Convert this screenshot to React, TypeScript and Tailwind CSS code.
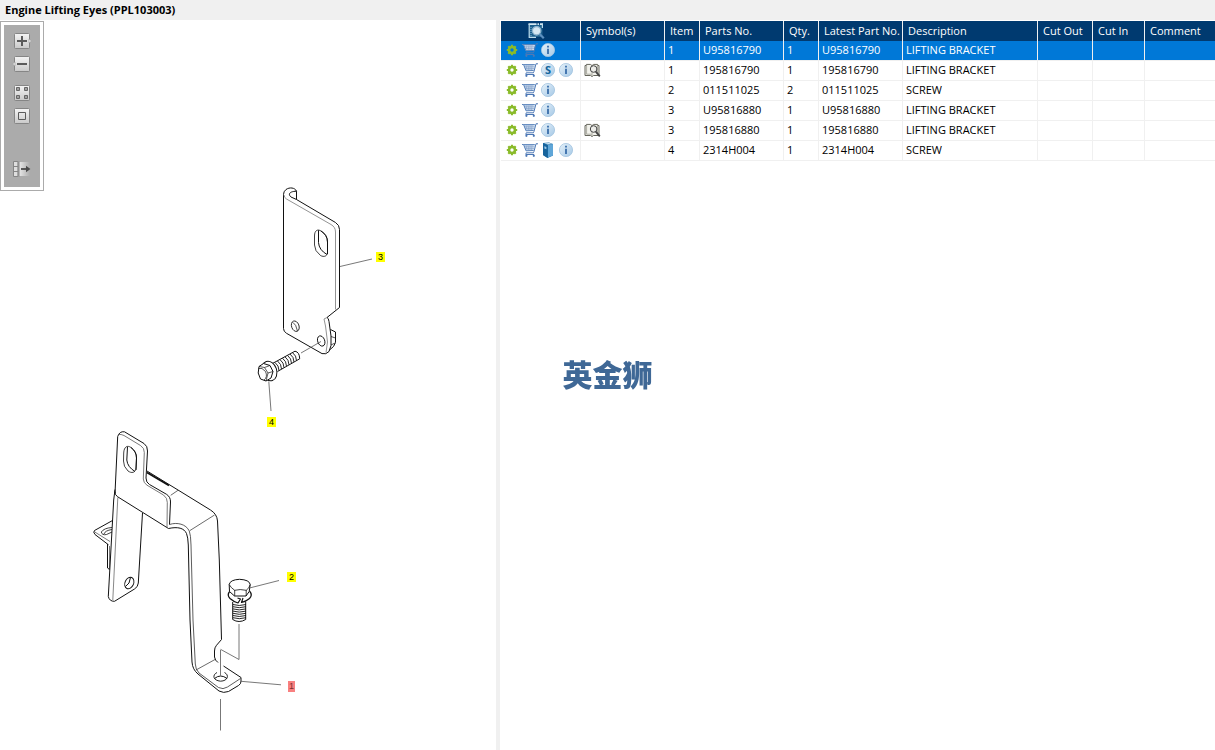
import type { ReactNode } from 'react'

type Action = 'gear' | 'cart' | 'info' | 'supersede' | 'book'

interface PartRow {
  actions: Action[]
  symbol?: boolean
  item: string
  partNo: string
  qty: string
  latest: string
  description: string
}

const ROWS: PartRow[] = [
  { actions: ['gear', 'cart', 'info'], item: '1', partNo: 'U95816790', qty: '1', latest: 'U95816790', description: 'LIFTING BRACKET' },
  { actions: ['gear', 'cart', 'supersede', 'info'], symbol: true, item: '1', partNo: '195816790', qty: '1', latest: '195816790', description: 'LIFTING BRACKET' },
  { actions: ['gear', 'cart', 'info'], item: '2', partNo: '011511025', qty: '2', latest: '011511025', description: 'SCREW' },
  { actions: ['gear', 'cart', 'info'], item: '3', partNo: 'U95816880', qty: '1', latest: 'U95816880', description: 'LIFTING BRACKET' },
  { actions: ['gear', 'cart', 'info'], symbol: true, item: '3', partNo: '195816880', qty: '1', latest: '195816880', description: 'LIFTING BRACKET' },
  { actions: ['gear', 'cart', 'book', 'info'], item: '4', partNo: '2314H004', qty: '1', latest: '2314H004', description: 'SCREW' },
]

const HEADERS = ['Symbol(s)', 'Item', 'Parts No.', 'Qty.', 'Latest Part No.', 'Description', 'Cut Out', 'Cut In', 'Comment']

function GearIcon() {
  return (
    <svg viewBox="0 0 18 18" className="size-[18px]">
      <circle cx="9" cy="9" r="3" fill="none" stroke="#8abb2a" strokeWidth="2.6" />
      <g stroke="#8abb2a" strokeWidth="2.2">
        <path d="M9 3.8v2M9 12.2v2M3.8 9h2M12.2 9h2M5.3 5.3l1.4 1.4M11.3 11.3l1.4 1.4M5.3 12.7l1.4-1.4M11.3 6.7l1.4-1.4" />
      </g>
    </svg>
  )
}

function CartIcon() {
  return (
    <svg viewBox="0 0 18 18" className="size-[18px]" fill="none">
      <path d="M2.5 4h11.5l-1.2 5.5H4.8z" fill="#d3e1f1" />
      <path d="M5 4l1.2 5.5M7 4l.8 5.5M9 4v5.5M11 4l-.4 5.5M3.2 5.8h10.3M4 7.6h9.1" stroke="#86a4cc" strokeWidth="0.7" />
      <path d="M1 3.5h1.6L5 9.8l7.6-.3M2.5 3.6h11.3" stroke="#5b84bb" />
      <path d="M17 2.8h-2l-2 7.6-.6 1.4H5.2l-.4 1.7h8.4" stroke="#4d78b5" />
      <circle cx="5.4" cy="14.8" r="1.1" fill="#4d78b5" />
      <circle cx="12.8" cy="14.8" r="1.1" fill="#4d78b5" />
    </svg>
  )
}

function InfoIcon() {
  return (
    <svg viewBox="0 0 18 18" className="size-[18px]">
      <defs>
        <linearGradient id="disc" x1="0" y1="0" x2="1" y2="1">
          <stop offset="0" stopColor="#e6f2fa" />
          <stop offset="1" stopColor="#a5c8e6" />
        </linearGradient>
      </defs>
      <circle cx="9" cy="9" r="6.6" fill="url(#disc)" stroke="#a3c4e0" strokeWidth="0.8" />
      <path d="M8 4.8h2v1.8H8zM8 7.8h2V13H8z" fill="#4577b0" />
    </svg>
  )
}

function SupersedeIcon() {
  return (
    <svg viewBox="0 0 18 18" className="size-[18px]">
      <circle cx="9" cy="9" r="6.6" fill="url(#disc)" stroke="#a3c4e0" strokeWidth="0.8" />
      <text x="9" y="13" textAnchor="middle" fontSize="11" fontWeight="bold" fontFamily="Open Sans, sans-serif" fill="#11649c">S</text>
    </svg>
  )
}

function BookIcon() {
  return (
    <svg viewBox="0 0 18 18" className="size-[18px]">
      <path d="M4 2l6-.6 4 1.6v11.4L8.6 17 4 14z" fill="#1d6ea8" />
      <path d="M9 4l5-1v11.4L9 16.6z" fill="#5fa6d8" />
      <path d="M5 2.4l5-.5 3 1-4.4.7z" fill="#d8eaf6" />
      <path d="M4 2.4L8.6 4v13L4 14z" fill="#17639c" />
      <path d="M5.4 5.2l2 .7v2.4l-2-.8z" fill="#9dcbea" />
    </svg>
  )
}

function OpenBookIcon() {
  return (
    <svg viewBox="0 0 18 18" className="size-[18px]" fill="none">
      <path d="M1 4.5h1.4V3.4h4L8 4.6l1.6-1.2h4v1.1H15v10H9.4L8 15.6l-1.4-1.1H1z" fill="#f2f2ec" stroke="#66665c" />
      <path d="M2.6 4v9.2h4L8 14.4V5M13.4 4v9.2" stroke="#9a9a90" strokeWidth="0.8" />
      <circle cx="9.6" cy="8" r="3.3" fill="#ecece8" stroke="#444" strokeWidth="1" />
      <path d="M11.8 10.6l4 4.8" stroke="#444" strokeWidth="1.8" />
    </svg>
  )
}

function PreviewIcon() {
  return (
    <svg viewBox="0 0 18 18" className="size-[18px]" fill="none">
      <path d="M2 2h13.5v13H2z" fill="#1c5f8d" />
      <path d="M1.5 2.2h14.5" stroke="#d4e8f2" strokeWidth="1.8" strokeDasharray="8 1 1.5 1" />
      <path d="M2.2 2v13.4H9M15.4 2v4" stroke="#bcdcec" strokeWidth="1.2" />
      <path d="M4 5v9" stroke="#86b9d6" strokeDasharray="1 1" />
      <circle cx="9.6" cy="8.8" r="4.2" fill="#d5e7f2" stroke="#8eb4cf" strokeWidth="1.3" />
      <path d="M12.8 12.2l4 4" stroke="#5c8fc0" strokeWidth="2.2" />
    </svg>
  )
}

const ACTIONS: Record<Action, { label: string; icon: ReactNode }> = {
  gear: { label: 'Options', icon: <GearIcon /> },
  cart: { label: 'Add to cart', icon: <CartIcon /> },
  info: { label: 'Information', icon: <InfoIcon /> },
  supersede: { label: 'Supersession', icon: <SupersedeIcon /> },
  book: { label: 'Catalogue', icon: <BookIcon /> },
}

function ToolButton({ label, children }: { label: string; children: ReactNode }) {
  return (
    <button type="button" aria-label={label} className="size-5">
      <svg viewBox="0 0 20 20" className="size-5" fill="none">
        {children}
      </svg>
    </button>
  )
}

function Plate() {
  return <rect x="2.5" y="2.5" width="15" height="15" rx="1" fill="url(#plate)" stroke="#858585" />
}

function Toolbar() {
  return (
    <div className="mt-px shrink-0 self-start border border-[#ababab] bg-white p-[3px]">
      <div className="flex w-9 flex-col items-center bg-[#ababab] pt-1.5 pb-0.5">
        <div className="flex flex-col gap-[3px]">
          <ToolButton label="Zoom in">
            <defs>
              <linearGradient id="plate" x1="0" y1="0" x2="0" y2="1">
                <stop offset="0" stopColor="#f4f4f4" />
                <stop offset="1" stopColor="#c9c9c9" />
              </linearGradient>
            </defs>
            <Plate />
            <path d="M17 8l2.5 2-2.5 2z" fill="#eee" stroke="#999" strokeWidth="0.6" />
            <path d="M5 10h10M10 5v10" stroke="#5a5a5a" strokeWidth="2" />
          </ToolButton>
          <ToolButton label="Zoom out">
            <Plate />
            <path d="M3 8l-2.5 2L3 12z" fill="#eee" stroke="#999" strokeWidth="0.6" />
            <path d="M5 10h10" stroke="#5a5a5a" strokeWidth="2" />
          </ToolButton>
        </div>
        <div className="mt-[9px] flex flex-col gap-[3px]">
          <ToolButton label="Fit to window">
            <Plate />
            <path d="M4.5 4.5h3v3h-3zM12.5 4.5h3v3h-3zM4.5 12.5h3v3h-3zM12.5 12.5h3v3h-3z" fill="#a0a0a0" stroke="#666" />
          </ToolButton>
          <ToolButton label="Actual size">
            <Plate />
            <path d="M6.5 6.5h7v7h-7z" stroke="#5a5a5a" />
          </ToolButton>
        </div>
        <div className="mt-[33px]">
          <ToolButton label="Move panel">
            <defs>
              <linearGradient id="fade" x1="0" y1="0" x2="1" y2="0">
                <stop offset="0" stopColor="#e8e8e8" />
                <stop offset="1" stopColor="#ababab" />
              </linearGradient>
            </defs>
            <path d="M7 3h11v14H7z" fill="url(#fade)" />
            <path d="M1.5 2.5h4.4v15H1.5z" fill="#dedede" stroke="#858585" />
            <path d="M1.5 7.5H6M1.5 12.5H6M7 2.5v15" stroke="#858585" />
            <path d="M9 10h6" stroke="#4a4a4a" strokeWidth="1.8" />
            <path d="M14 6.8l4.4 3.2-4.4 3.2z" fill="#4a4a4a" />
          </ToolButton>
        </div>
      </div>
    </div>
  )
}

interface CalloutProps {
  x: number
  y: number
  label: string
  active?: boolean
}

function Callout({ x, y, label, active }: CalloutProps) {
  return (
    <g>
      <rect x={x - (active ? 4 : 5)} y={y - 5} width={active ? 7 : 9} height={active ? 11 : 10} fill={active ? '#f88080' : '#ffff00'} />
      <text x={x - 0.5} y={y + 3} textAnchor="middle" fontSize="9" fontFamily="Liberation Sans, sans-serif" fill={active ? '#7c3030' : '#000'}>
        {label}
      </text>
    </g>
  )
}

function Diagram() {
  return (
    <svg
      viewBox="44 20 452 730"
      className="w-[452px] shrink-0"
      fill="none"
      stroke="#111"
      strokeLinejoin="round"
      role="img"
      aria-label="Engine lifting eyes exploded view"
    >
      {/* upper bracket */}
      <path d="M330.5 329.5L335.5 332V342.5L333.5 346.5L329.5 350" />
      <path d="M331 336.5L335.5 338M331 345L335 343" strokeWidth="0.7" />
      <path d="M283.5 194.5V328.5Q283.5 331.5 286.5 333.3L322 353.6Q326 354.8 329 351.5L331 345.5V336L329 321.5Q328.5 317.8 327 317.5L339.5 307.5V229.5Q339.5 225 335.5 222.5L296.5 199.5L291 197C287.5 194 290 191.3 296.5 191.2C295 187.5 289.5 187 286 189.5Q283.5 191.5 283.5 194.5M296.5 191.2V199.5" />
      <path d="M284 195Q284 197.5 286.5 199L331 224.5Q335.5 227 335.5 232V309.5M324 319L325.5 326L327.5 342L326 352.5M327 317.5L324 319" stroke="#777" strokeWidth="0.8" />
      <path d="M314.5 236C314.5 230 318 229 321 231Q327.5 235 327.5 242V252.5C327.5 256 324 257.5 320.5 255.5Q314.5 251 314.5 245Z" strokeWidth="0.8" />
      <path d="M318.5 230.3V242.5Q319 250 327 254.5M321 231Q327.5 235 327.5 242V254" />
      <ellipse cx="295.3" cy="326.2" rx="3.7" ry="5.4" transform="rotate(-20 295.3 326.2)" strokeWidth="0.8" />
      <path d="M293 322.5Q296 324 297.5 331" strokeWidth="0.7" />
      <ellipse cx="321.2" cy="341" rx="3.5" ry="5.3" transform="rotate(-20 321.2 341)" strokeWidth="0.9" />
      <path d="M301 353L321 341.5" stroke="#555" strokeWidth="0.8" />

      {/* flanged screw */}
      <path d="M273 363.2L295 351.2Q299.5 352 299.7 358.8L277.5 371.5" fill="#fff" />
      <path d="M275 362.5q4 3 4 8M277.5 361q4 3 4 8M280 359.6q4 3 4 8M282.5 358.2q4 3 4 8M285 356.8q4 3 4 8M287.5 355.4q4 3 4 8M290 354q4 3 4 8M292.5 352.6q4 3 4 8" strokeWidth="0.9" />
      <ellipse cx="269.3" cy="371" rx="7.4" ry="10" transform="rotate(-18 269.3 371)" fill="#fff" />
      <path d="M259 366.5L263.5 363.5L270 365.5L273 371.5L271 378L266 381L260.5 379L258.2 373Z" fill="#fff" />
      <path d="M259 366.5L264.5 367.5L268 373L266 381M264.5 367.5L270 365.5M268 373L273 371.5M258.5 368.5Q262 367 265.5 371.5Q268 377 264 380" strokeWidth="0.7" />
      <path d="M268.8 381.5L271 411M340 266.5L372 259" stroke="#555" strokeWidth="0.8" />

      {/* rear tab of the lower bracket */}
      <path d="M112.5 520.5L94.5 530.5Q92.8 532 95 534.5L108.5 544.8M107.5 544V568L109.5 569.5" />
      <path d="M94 531.5L110 541.5M109.5 546V569" strokeWidth="0.7" stroke="#444" />
      <path d="M112 527.5Q104 528 101.3 532Q102 535.5 106.5 534.5L112 532M104 534Q105 530.5 112 529.5" strokeWidth="0.8" />

      {/* rear leg */}
      <path d="M115 489.5L113.7 500L108.3 596.5Q109.5 601.5 114.5 601.3L134.5 589Q138 587 138.3 583L142.5 513" />
      <path d="M117.8 497.5L112.8 600" strokeWidth="0.7" stroke="#555" />
      <ellipse cx="129.3" cy="583" rx="4.3" ry="6" transform="rotate(24 129.3 583)" strokeWidth="0.9" />
      <path d="M130.5 577.5Q130 584 125.5 586.5" />

      {/* hook plate */}
      <path d="M115 493L117.7 436.5Q119.5 431 124.5 431.8L144 443.5Q147.7 446 147.5 451L146 478Q146 482.5 149.5 484.5L166.5 494.3Q170.7 497 170.5 502L169.5 524.5" />
      <path d="M118.5 434.5Q121 434 124 435.5L140.5 445.5Q144.5 448 144.3 452.5L143.3 479Q143.5 483 147 485.2L163.5 495Q167.5 498 167.3 502.5L167 527" strokeWidth="0.8" stroke="#555" />
      <path d="M115 491.5Q114.5 494.5 117.5 496.7L168.5 528.5" />
      <path d="M123.7 453C124 446.5 127.5 445 131 447.5Q136.5 451.5 136.5 458L136 468C135.5 473 131.5 473.5 128 471Q123.3 466.5 123.5 461Z" strokeWidth="0.8" />
      <path d="M127.5 446.8L126.8 460Q127.5 467 135 471.5M131 447.5Q136.5 451.5 136.5 458L136 470" />

      {/* strap and long leg */}
      <path d="M147 471L178 490L210.5 510Q217 514 217.5 521L219.3 560L221.5 639.5L216.5 645.3Q214.5 647.5 214.5 651V657Q215 660.5 218 662.5" />
      <path d="M147 472.5L169 485.5" strokeWidth="1.8" />
      <path d="M178 490.3L170.7 495.3M214.5 515L190 530.5M196 670L215 659.5" strokeWidth="0.8" stroke="#444" />
      <path d="M169.5 524.5C177 522 186 524 189.3 531Q190.8 535 191 545L193 620L195.3 664Q195.5 669.5 199 673L218.5 687.5Q223 690 227.5 687L240.5 678.5" strokeWidth="0.8" stroke="#333" />
      <path d="M168.5 528.5C178 526.5 184 528 186.5 533.5Q188 537 188.3 545L190 620L192 662Q192.5 669.5 198 674L219 691Q223.5 693.5 228.5 691.5L238.5 685.5Q241.2 684 241 681V677.5L223.5 666" />
      <path d="M217 672.5C212 675 213 680.5 220.5 681.2C228 681 229.5 675 224.5 672.5" strokeWidth="0.9" />
      <path d="M214.5 678.5Q220.5 673.5 227 678.5" />

      {/* hex screw with washer */}
      <path d="M232.7 602V619.5Q239 623.5 245.7 619.5V602" fill="#fff" />
      <path d="M233 604.5q6 2 13 0M233 606.7q6 2 13 0M233 608.9q6 2 13 0M233 611.1q6 2 13 0M233 613.3q6 2 13 0M233 615.5q6 2 13 0M233 617.7q6 2 13 0" strokeWidth="0.9" />
      <path d="M230 591Q226.5 595 230 598.5Q234 602 238 603L240.5 599L237.5 598M249.5 591Q253 595 249.5 598.5Q246 601.5 241.5 602.5L243 598" fill="#fff" strokeWidth="1.2" />
      <path d="M229.2 584.5Q230 579.8 239.5 579.3Q249.5 579.8 250.2 584.5L249.2 591.5L246 596H234.5L229.5 591.5Z" fill="#fff" />
      <path d="M229.2 584.5Q231 588 234.7 590.3Q240 588.8 246.2 590.3Q249.5 588 250.2 584.5M234.7 590V596M246.2 590V596" strokeWidth="0.8" />

      <g stroke="#555" strokeWidth="0.8">
        <path d="M239 624V659.5M220.5 650V676M220.5 699V730.5" stroke="#777" strokeWidth="1" />
        <path d="M220.5 649.3L239 659.5M249.5 588L279 580.5M241 681.3L281 684.8" />
      </g>

      <g stroke="none">
        <Callout x={381} y={257} label="3" />
        <Callout x={272} y={422} label="4" />
        <Callout x={292} y={577} label="2" />
        <Callout x={292} y={686} label="1" active />
      </g>
    </svg>
  )
}

function Cell({ children }: { children?: ReactNode }) {
  return <td className="border-r border-b border-[#f0f0f0] py-0 pr-0 pl-[3px] align-top last:border-r-0">{children}</td>
}

function PartsTable() {
  return (
    <table className="w-full table-fixed border-separate border-spacing-0 text-left text-[11px] whitespace-nowrap">
      <colgroup>
        <col className="w-20" />
        <col className="w-21" />
        <col className="w-[35px]" />
        <col className="w-21" />
        <col className="w-[35px]" />
        <col className="w-21" />
        <col className="w-[135px]" />
        <col className="w-[55px]" />
        <col className="w-[52px]" />
        <col />
      </colgroup>
      <thead>
        <tr className="h-5 bg-[#003a70] leading-[19px] text-white">
          <th className="border-r border-[#f0f0f0] py-0 pr-0 pl-[26px]">
            <button type="button" aria-label="Preview" className="block">
              <PreviewIcon />
            </button>
          </th>
          {HEADERS.map((h) => (
            <th key={h} className="border-r border-[#f0f0f0] py-0 pr-0 pl-[5px] align-top font-normal last:border-r-0">
              {h}
            </th>
          ))}
        </tr>
      </thead>
      <tbody className="leading-[17px]">
        {ROWS.map((row, i) => (
          <tr key={row.partNo} className={i === 0 ? 'h-5 bg-[#0078d7] text-white' : 'h-5 bg-white text-black'}>
            <td className="border-r border-b border-[#f0f0f0] py-0 pr-0 pl-[2px] align-top">
              <div className="flex">
                {row.actions.map((a) => (
                  <button key={a} type="button" aria-label={ACTIONS[a].label}>
                    {ACTIONS[a].icon}
                  </button>
                ))}
              </div>
            </td>
            <Cell>{row.symbol && <OpenBookIcon />}</Cell>
            <Cell>{row.item}</Cell>
            <Cell>{row.partNo}</Cell>
            <Cell>{row.qty}</Cell>
            <Cell>{row.latest}</Cell>
            <Cell>{row.description}</Cell>
            <Cell />
            <Cell />
            <Cell />
          </tr>
        ))}
      </tbody>
    </table>
  )
}

export default function App() {
  return (
    <div className="flex min-h-screen flex-col bg-white font-['Open_Sans','Noto_Sans_CJK_SC',sans-serif]">
      <header className="h-5 bg-[#f0f0f0] px-[5px]">
        <h1 className="text-[11px] leading-5 font-bold text-black">Engine Lifting Eyes (PPL103003)</h1>
      </header>
      <main className="flex flex-1">
        <section className="flex w-2/5 min-w-[500px] shrink-0 items-start border-r-4 border-[#f0f0f0]">
          <Toolbar />
          <Diagram />
        </section>
        <section className="min-w-0 flex-1 pt-px pl-px">
          <PartsTable />
        </section>
      </main>
      {/* watermark stays centred over both panes */}
      <div className="pointer-events-none fixed inset-0 flex items-center justify-center pb-1">
        <span className="font-['Noto_Sans_CJK_SC',sans-serif] text-[30px] leading-none font-black text-[#3f6896]">英金狮</span>
      </div>
    </div>
  )
}
